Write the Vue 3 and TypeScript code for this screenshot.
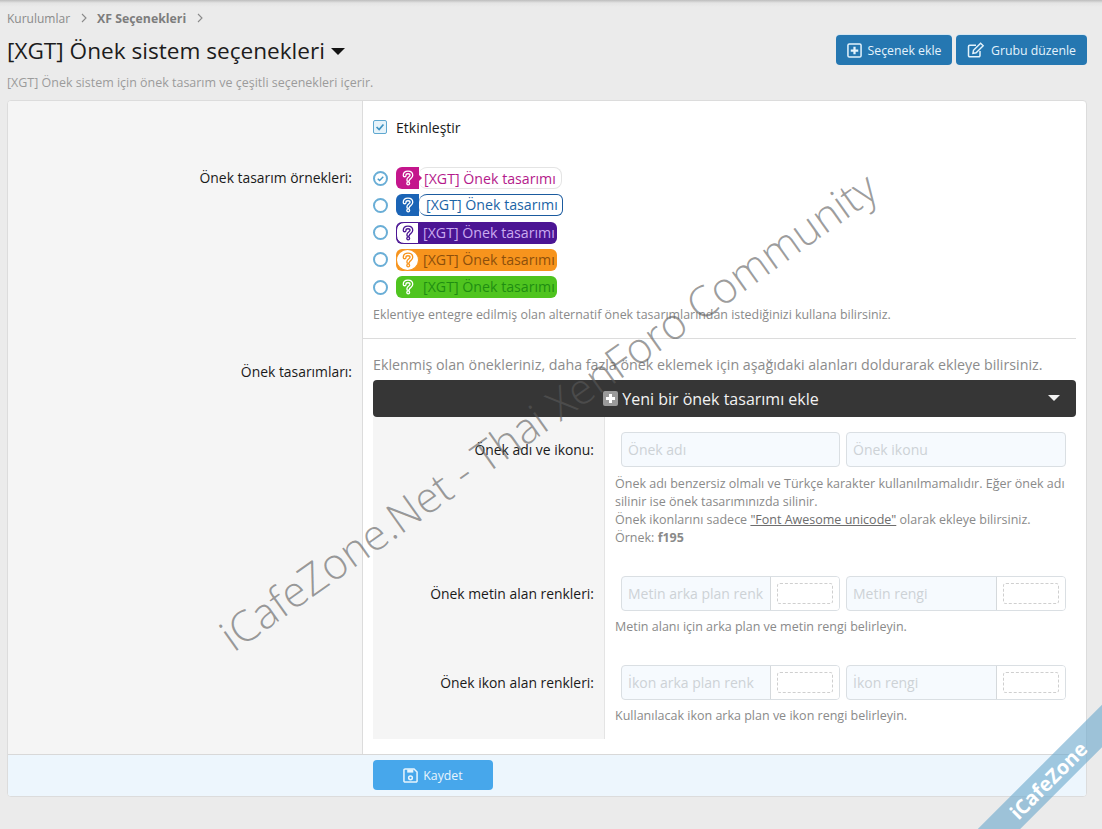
<script setup lang="ts">
interface Prefix { key: string; checked: boolean }
const prefixes: Prefix[] = [
  { key: 'p1', checked: true },
  { key: 'p2', checked: false },
  { key: 'p3', checked: false },
  { key: 'p4', checked: false },
  { key: 'p5', checked: false },
]
</script>

<template>
  <div class="page">
    <div class="crumbs">
      <span>Kurulumlar</span>
      <svg class="chev" viewBox="0 0 8 10"><path d="M2 1l4 4-4 4" /></svg>
      <b>XF Seçenekleri</b>
      <svg class="chev" viewBox="0 0 8 10"><path d="M2 1l4 4-4 4" /></svg>
    </div>
    <div class="head">
      <h1>[XGT] Önek sistem seçenekleri <span class="caret"></span></h1>
      <div class="btns">
        <button class="btn">
          <svg viewBox="0 0 16 16" width="15" height="15"><rect x="1" y="1" width="14" height="14" rx="1.5" fill="none" stroke="currentColor" stroke-width="1.6" /><path d="M8 4v8M4 8h8" stroke="currentColor" stroke-width="2.4" /></svg>
          Seçenek ekle
        </button>
        <button class="btn">
          <svg viewBox="0 0 18 16" width="18" height="16"><path d="M13 9v4.5a1.2 1.2 0 0 1-1.2 1.2H2.7a1.2 1.2 0 0 1-1.2-1.2V4.4a1.2 1.2 0 0 1 1.2-1.2H9" fill="none" stroke="currentColor" stroke-width="1.5" /><path d="M6.5 8.2L13.6 1.2l2.6 2.6-7.1 7-3.2.6z" fill="none" stroke="currentColor" stroke-width="1.4" /></svg>
          Grubu düzenle
        </button>
      </div>
    </div>
    <p class="desc">[XGT] Önek sistem için önek tasarım ve çeşitli seçenekleri içerir.</p>

    <form class="card" @submit.prevent>
      <div class="row first">
        <div class="lab"></div>
        <div class="val">
          <label class="check">
            <span class="cbox"><svg viewBox="0 0 14 14"><path d="M3 7l3 3 5-6" /></svg></span>
            Etkinleştir
          </label>
        </div>
      </div>
      <div class="row second">
        <div class="lab"><span>Önek tasarım örnekleri:</span></div>
        <div class="val">
          <div class="plist">
            <div v-for="p in prefixes" :key="p.key" class="pitem">
              <span class="radio" :class="{ on: p.checked }">
                <svg v-if="p.checked" viewBox="0 0 14 14"><path d="M3.5 7.2l2.4 2.3 4.6-4.8" /></svg>
              </span>
              <span class="badge" :class="p.key">
                <span class="bi">
                  <svg viewBox="0 0 12 16" width="12" height="16">
                    <path class="q1" d="M2.6 5.4C2.6 3.4 4 2.4 6 2.4s3.4 1.1 3.4 2.9c0 2.4-3.2 2.5-3.2 4.6" />
                    <path class="q1" d="M6.2 13.2v.3" />
                    <path class="q2" d="M2.6 5.4C2.6 3.4 4 2.4 6 2.4s3.4 1.1 3.4 2.9c0 2.4-3.2 2.5-3.2 4.6" />
                    <path class="q2" d="M6.2 13.2v.3" />
                  </svg>
                </span>
                <span class="bt">[XGT] Önek tasarımı</span>
              </span>
            </div>
          </div>
          <p class="hint hint-top">Eklentiye entegre edilmiş olan alternatif önek tasarımlarından istediğinizi kullana bilirsiniz.</p>
        </div>
      </div>
      <div class="row third">
        <div class="lab"><span>Önek tasarımları:</span></div>
        <div class="val">
          <p class="intro">Eklenmiş olan önekleriniz, daha fazla önek eklemek için aşağıdaki alanları doldurarak ekleye bilirsiniz.</p>
          <div class="bar">
            <span class="plus"></span>
            Yeni bir önek tasarımı ekle
            <span class="down"></span>
          </div>
          <div class="sub">
            <div class="srow s1">
              <div class="slab">Önek adı ve ikonu:</div>
              <div class="sval">
                <div class="fields">
                  <div class="field"><span class="ph">Önek adı</span></div>
                  <div class="field"><span class="ph">Önek ikonu</span></div>
                </div>
                <p class="hint">Önek adı benzersiz olmalı ve Türkçe karakter kullanılmamalıdır. Eğer önek adı silinir ise önek tasarımınızda silinir.<br>Önek ikonlarını sadece <u class="fa">"Font Awesome unicode"</u> olarak ekleye bilirsiniz.<br>Örnek: <b>f195</b></p>
              </div>
            </div>
            <div class="srow s2">
              <div class="slab">Önek metin alan renkleri:</div>
              <div class="sval">
                <div class="fields">
                  <div class="field color"><span class="ph">Metin arka plan renk</span><span class="add"><i></i></span></div>
                  <div class="field color"><span class="ph">Metin rengi</span><span class="add"><i></i></span></div>
                </div>
                <p class="hint">Metin alanı için arka plan ve metin rengi belirleyin.</p>
              </div>
            </div>
            <div class="srow s3">
              <div class="slab">Önek ikon alan renkleri:</div>
              <div class="sval">
                <div class="fields">
                  <div class="field color"><span class="ph">İkon arka plan renk</span><span class="add"><i></i></span></div>
                  <div class="field color"><span class="ph">İkon rengi</span><span class="add"><i></i></span></div>
                </div>
                <p class="hint">Kullanılacak ikon arka plan ve ikon rengi belirleyin.</p>
              </div>
            </div>
          </div>
        </div>
      </div>
      <div class="foot">
        <button class="save">
          <svg viewBox="0 0 16 16" width="15" height="15"><path d="M2.2 1h9.6L15 4.2v9.6a1.2 1.2 0 0 1-1.2 1.2H2.2A1.2 1.2 0 0 1 1 13.8V2.2A1.2 1.2 0 0 1 2.2 1z" fill="none" stroke="currentColor" stroke-width="1.6" /><path d="M4.5 1.5h6.5v3.4H4.5z" fill="currentColor" /><circle cx="8" cy="10.5" r="2" fill="none" stroke="currentColor" stroke-width="1.6" /></svg>
          Kaydet
        </button>
      </div>
    </form>

    <div class="wm">iCafeZone.Net - Thai XenForo Community</div>
    <div class="ribbon"><span>iCafeZone</span></div>
  </div>
</template>

<style>
html, body { margin: 0; background: #ebebeb; }
</style>

<style scoped>
.page {
  position: relative;
  width: 1102px;
  height: 829px;
  overflow: hidden;
  box-sizing: border-box;
  padding: 9px 15px 0 7px;
  background: linear-gradient(#bdbdbd 0, #e4e4e4 3px, #ebebeb 7px);
  font-family: "Open Sans", "Noto Sans", sans-serif;
  font-size: 13px;
  color: #1a1a1a;
}
.crumbs {
  display: flex;
  align-items: center;
  height: 18px;
  font-size: 12px;
  color: #8a8a8a;
}
.crumbs b { color: #7d7d7d; font-weight: 700; font-size: 12.3px; }
.chev { width: 8px; height: 10px; margin: 0 9px 0 10px; }
.chev path { fill: none; stroke: #8a8a8a; stroke-width: 1.1; }
.head {
  display: flex;
  justify-content: space-between;
  align-items: flex-start;
  margin-top: 8px;
  height: 35px;
}
h1 {
  margin: 0;
  font-size: 22.6px;
  font-weight: 400;
  line-height: 32px;
  color: #1c1c1c;
}
.caret {
  display: inline-block;
  vertical-align: 4px;
  margin-left: 0;
  border-left: 7px solid transparent;
  border-right: 7px solid transparent;
  border-top: 7px solid #141414;
}
.btns { display: flex; gap: 4px; }
.btn {
  display: flex;
  align-items: center;
  justify-content: center;
  gap: 6px;
  height: 30px;
  padding: 0;
  border: 0;
  border-radius: 4px;
  background: #2577b1;
  color: #e4f3fc;
  font: inherit;
  font-size: 12.3px;
  box-shadow: 0 -1px 0 #d4e6f1;
}
.btn:nth-child(1) { width: 116px; }
.btn:nth-child(2) { width: 131px; }
.desc {
  margin: 4px 0 0;
  height: 19px;
  line-height: 17px;
  font-size: 12.47px;
  color: #9b9b9b;
  white-space: nowrap;
}
.card {
  margin-top: 7px;
  width: 1080px;
  box-sizing: border-box;
  background: #fff;
  border: 1px solid #dcdcdc;
  border-radius: 4px;
  overflow: hidden;
  height: 697px;
  display: flex;
  flex-direction: column;
}
.row {
  display: grid;
  grid-template-columns: 355px 1fr;
}
.lab {
  background: #f5f5f5;
  border-right: 1px solid #dcdcdc;
  text-align: right;
  padding-right: 10px;
}
.val { padding: 0 10px; min-width: 0; }
.first { height: 56px; }
.first .val { padding-top: 16px; }
.check { display: flex; align-items: center; gap: 9px; height: 20px; font-size: 14px; }
.cbox {
  width: 12px;
  height: 12px;
  border: 1px solid #5fa8d0;
  background: #e6f3fa;
  border-radius: 2px;
  display: block;
}
.cbox svg, .radio svg { display: block; width: 100%; height: 100%; }
.cbox path { fill: none; stroke: #3f93c2; stroke-width: 2; }
.second { height: 181px; }
.second .lab { padding-top: 11px; line-height: 20px; font-size: 13.9px; }
.plist { padding-top: 7.5px; }
.pitem { display: flex; align-items: center; height: 27.25px; }
.radio {
  width: 11px;
  height: 11px;
  border: 2px solid #6aaed6;
  border-radius: 50%;
  margin-right: 8px;
  flex: none;
}
.radio path { fill: none; stroke: #4b9cc9; stroke-width: 1.8; }
.badge {
  display: inline-flex;
  align-items: stretch;
  height: 22px;
  border-radius: 6px;
  font-size: 14.2px;
  line-height: 22px;
  box-sizing: border-box;
}
.bi {
  display: flex;
  align-items: center;
  justify-content: center;
  width: 23px;
  flex: none;
  position: relative;
  box-sizing: border-box;
  border-radius: 6px 0 0 6px;
}
.bt { padding: 0 4px; white-space: nowrap; border-radius: 0 6px 6px 0; box-sizing: border-box; }
.q1, .q2 { fill: none; stroke-linecap: round; }
.q1 { stroke-width: 4; }
.q2 { stroke-width: 1.4; }

.p1 .bi { background: #c4168c; }
.p1 .bi::after {
  content: "";
  position: absolute;
  right: -3px; top: 8px;
  border-top: 3px solid transparent;
  border-bottom: 3px solid transparent;
  border-left: 3px solid #c4168c;
}
.p1 .q1 { stroke: #fff; } .p1 .q2 { stroke: #c4168c; }
.p1 .bt { width: 143px; border: 1px solid #e4e4e4; border-left: 0; color: #b41a8b; padding-left: 5px; line-height: 21px; border-radius: 8px; }
.p2 .bi { background: #1b64b6; }
.p2 .q1 { stroke: #fff; } .p2 .q2 { stroke: #1b64b6; }
.p2 .bt { width: 144px; border: 1px solid #1b5b9f; border-left: 0; color: #1b64a6; padding-left: 7px; line-height: 20px; background: #fff; border-radius: 8px 6px 6px 8px; }
.p3 { background: #4b1594; }
.p3 .bi { background: #fff; border: 1px solid #4b1594; border-radius: 8px 0 0 8px; }
.p3 .q1 { stroke: #4b1594; } .p3 .q2 { stroke: #fff; }
.p3 .bt { color: #caaaf0; width: 138px; padding-left: 4px; }
.p4 { background: #f7941d; }
.p4 .bi { background: #fff; border: 1px solid #f7941d; border-radius: 50%; }
.p4 .q1 { stroke: #f7941d; } .p4 .q2 { stroke: #fff; }
.p4 .bt { color: #8c4f0c; width: 138px; padding-left: 4px; }
.p5 { background: #4fc41f; }
.p5 .q1 { stroke: #fff; } .p5 .q2 { stroke: #4fc41f; }
.p5 .bt { color: #1f8d12; width: 138px; padding-left: 4px; }

.hint {
  margin: 0;
  font-size: 12.5px;
  line-height: 18px;
  color: #8a8a8a;
}
.hint-top { margin-top: 5.5px; white-space: nowrap; font-size: 12.4px; }
.hint b { font-weight: 700; }
.fa { color: #6d6d6d; }
.third { flex: 1; min-height: 0; }
.third .lab { padding-top: 24px; font-size: 13.9px; line-height: 20px; }
.third .val { margin-right: 10px; padding-right: 0; border-top: 1px solid #dcdcdc; }
.intro {
  margin: 0;
  padding-top: 16px;
  height: 41px;
  box-sizing: border-box;
  font-size: 14.25px;
  line-height: 20px;
  color: #8c8c8c;
  white-space: nowrap;
}
.bar {
  position: relative;
  height: 37px;
  box-sizing: border-box;
  padding-right: 27px;
  display: flex;
  align-items: center;
  justify-content: center;
  gap: 4px;
  background: #363636;
  border-radius: 4px;
  color: #f2f2f2;
  font-size: 16px;
}
.plus {
  width: 15px;
  height: 15px;
  border-radius: 2px;
  background: linear-gradient(#fff, #fff) center / 9px 3px no-repeat, linear-gradient(#fff, #fff) center / 3px 9px no-repeat, #9a9a9a;
}
.down {
  position: absolute;
  right: 16px;
  top: 15px;
  border-left: 6px solid transparent;
  border-right: 6px solid transparent;
  border-top: 6px solid #f2f2f2;
}
.sub { height: 322px; display: flex; flex-direction: column; }
.srow { display: grid; grid-template-columns: 232px 1fr; }
.slab {
  background: #f5f5f5;
  border-right: 1px solid #e4e4e4;
  text-align: right;
  padding: 23px 10px 0 0;
  font-size: 13.9px;
  line-height: 20px;
}
.sval { padding: 15px 10px 0 16px; min-width: 0; }
.s1 { height: 144px; }
.s2 { height: 89px; }
.s3 { flex: 1; }
.fields { display: grid; grid-template-columns: 219px 220px; gap: 6px; }
.field {
  height: 35px;
  box-sizing: border-box;
  display: flex;
  align-items: stretch;
  border: 1px solid #dadfe3;
  border-radius: 4px;
  background: #f6fafe;
  overflow: hidden;
}
.ph {
  flex: 1;
  min-width: 0;
  padding-left: 6px;
  line-height: 33px;
  font-size: 14px;
  color: #cdd2d6;
  white-space: nowrap;
  overflow: hidden;
}
.add {
  width: 69px;
  flex: none;
  box-sizing: border-box;
  border-left: 1px solid #d5d9dc;
  background: #fff;
  padding: 6px;
}
.add i {
  display: block;
  height: 100%;
  box-sizing: border-box;
  border: 1px dashed #cfcfcf;
  border-radius: 3px;
}
.fields + .hint { margin: 7px 0 0 -6px; }
.s1 .fields + .hint { margin-top: 8px; }
.foot {
  flex: none;
  height: 42px;
  box-sizing: border-box;
  border-top: 1px solid #d8d8d8;
  background: #edf6fd;
  padding: 5px 0 0 365px;
}
.save {
  display: flex;
  align-items: center;
  justify-content: center;
  gap: 5px;
  width: 120px;
  height: 30px;
  padding: 0;
  border: 0;
  border-radius: 4px;
  background: #47a7eb;
  color: #e8f5fd;
  font: inherit;
  font-size: 12.3px;
}
.wm {
  position: absolute;
  left: 103px;
  top: 386px;
  width: 890px;
  text-align: center;
  font-size: 42.8px;
  line-height: 50px;
  font-weight: 300;
  color: rgba(90, 90, 90, 0.6);
  transform: rotate(-35.3deg);
  white-space: nowrap;
  pointer-events: none;
}
.ribbon {
  position: absolute;
  left: 918px;
  top: 765px;
  width: 260px;
  height: 30px;
  background: rgba(110, 170, 205, 0.62);
  transform: rotate(-45deg);
  display: flex;
  justify-content: center;
  align-items: center;
  color: #fff;
  font-weight: 700;
  font-size: 20px;
  pointer-events: none;
}
</style>
